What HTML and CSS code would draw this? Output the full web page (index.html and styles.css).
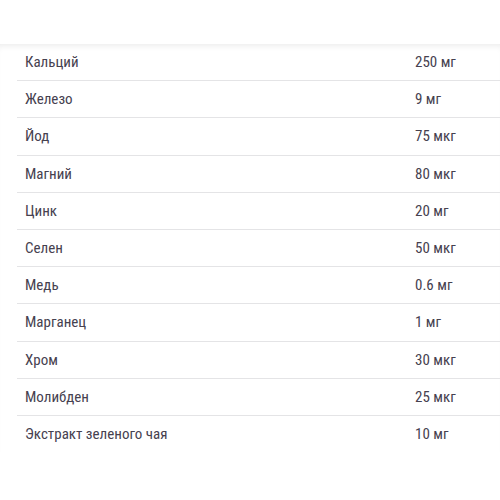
FILE: index.html
```html
<!DOCTYPE html>
<html lang="ru">
<head>
<meta charset="utf-8">
<link rel="stylesheet" href="styles.css">
</head>
<body>
<div class="panel">
  <table class="comp">
    <tbody>
      <tr><td class="name">Кальций</td><td class="val">250 мг</td></tr>
      <tr><td class="name">Железо</td><td class="val">9 мг</td></tr>
      <tr><td class="name">Йод</td><td class="val">75 мкг</td></tr>
      <tr><td class="name">Магний</td><td class="val">80 мкг</td></tr>
      <tr><td class="name">Цинк</td><td class="val">20 мг</td></tr>
      <tr><td class="name">Селен</td><td class="val">50 мкг</td></tr>
      <tr><td class="name">Медь</td><td class="val">0.6 мг</td></tr>
      <tr><td class="name">Марганец</td><td class="val">1 мг</td></tr>
      <tr><td class="name">Хром</td><td class="val">30 мкг</td></tr>
      <tr><td class="name">Молибден</td><td class="val">25 мкг</td></tr>
      <tr><td class="name">Экстракт зеленого чая</td><td class="val">10 мг</td></tr>
    </tbody>
  </table>
</div>
</body>
</html>
```
FILE: styles.css
```css
html, body {
  margin: 0;
  padding: 0;
  background: #fff;
}
.panel {
  margin-top: 44px;
  padding-left: 17px;
  box-shadow: inset 0 6px 6px -4px rgba(0, 0, 0, 0.08);
}
.comp {
  width: 100%;
  border-collapse: collapse;
  font-family: "Roboto Condensed", "DejaVu Sans Condensed", sans-serif;
  font-size: 15px;
  color: #46414f;
}
.comp td {
  height: 36.2px;
  padding: 0 8px;
  border-bottom: 1px solid #e4e4e6;
  vertical-align: middle;
}
.comp tr:last-child td {
  border-bottom: none;
}
.comp .name {
  width: 374px;
}
```
